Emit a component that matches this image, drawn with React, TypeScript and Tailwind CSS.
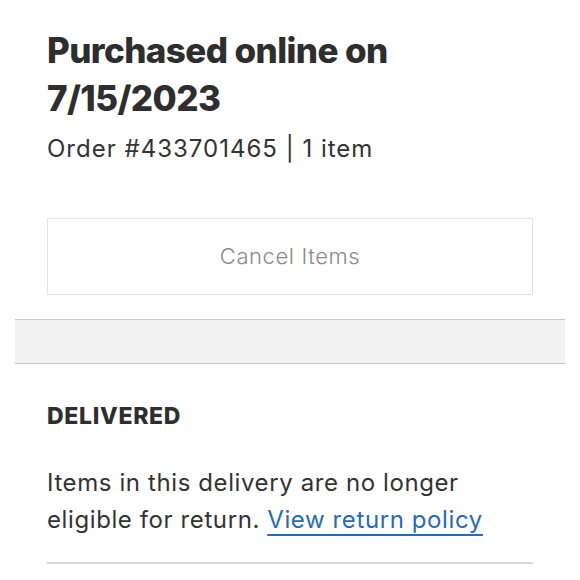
export default function App() {
  return (
    <div className="w-[580px] h-[580px] overflow-hidden bg-white font-['Inter',sans-serif] text-[#2b2b2b]">
      <div className="px-[47px] pt-[26px]">
        <h1 className="text-[35px] font-extrabold leading-[48px] tracking-[-0.6px] text-[#2e2e2e]">
          Purchased online on
          <br />
          7/15/2023
        </h1>
        <p className="mt-[12px] text-[24px] leading-[30px] tracking-[1px] text-[#333]">
          Order #433701465 | 1 item
        </p>
        <button className="mt-[54px] flex h-[77px] w-full items-center justify-center border border-[#e3e3e3] text-[22px] font-light tracking-[0.6px] text-[#8a8a8a]">
          Cancel Items
        </button>
      </div>
      <div className="mx-[15px] mt-[24px] h-[45px] border-y border-[#c8c8c8] bg-[#f2f2f2]" />
      <div className="px-[47px] pt-[40px]">
        <h2 className="text-[23px] font-extrabold leading-[24px] tracking-[0.7px] text-[#2e2e2e]">DELIVERED</h2>
        <p className="mt-[36px] text-[24px] leading-[37px] tracking-[0.6px] text-[#333]">
          Items in this delivery are no longer
          <br />
          eligible for return.{" "}
          <a href="#" className="text-[#2a6ab5] underline underline-offset-[6px] decoration-[1.5px]">
            View return policy
          </a>
        </p>
        <div className="mt-[24px] h-[2px] bg-[#d6d6d6]" />
      </div>
    </div>
  );
}
